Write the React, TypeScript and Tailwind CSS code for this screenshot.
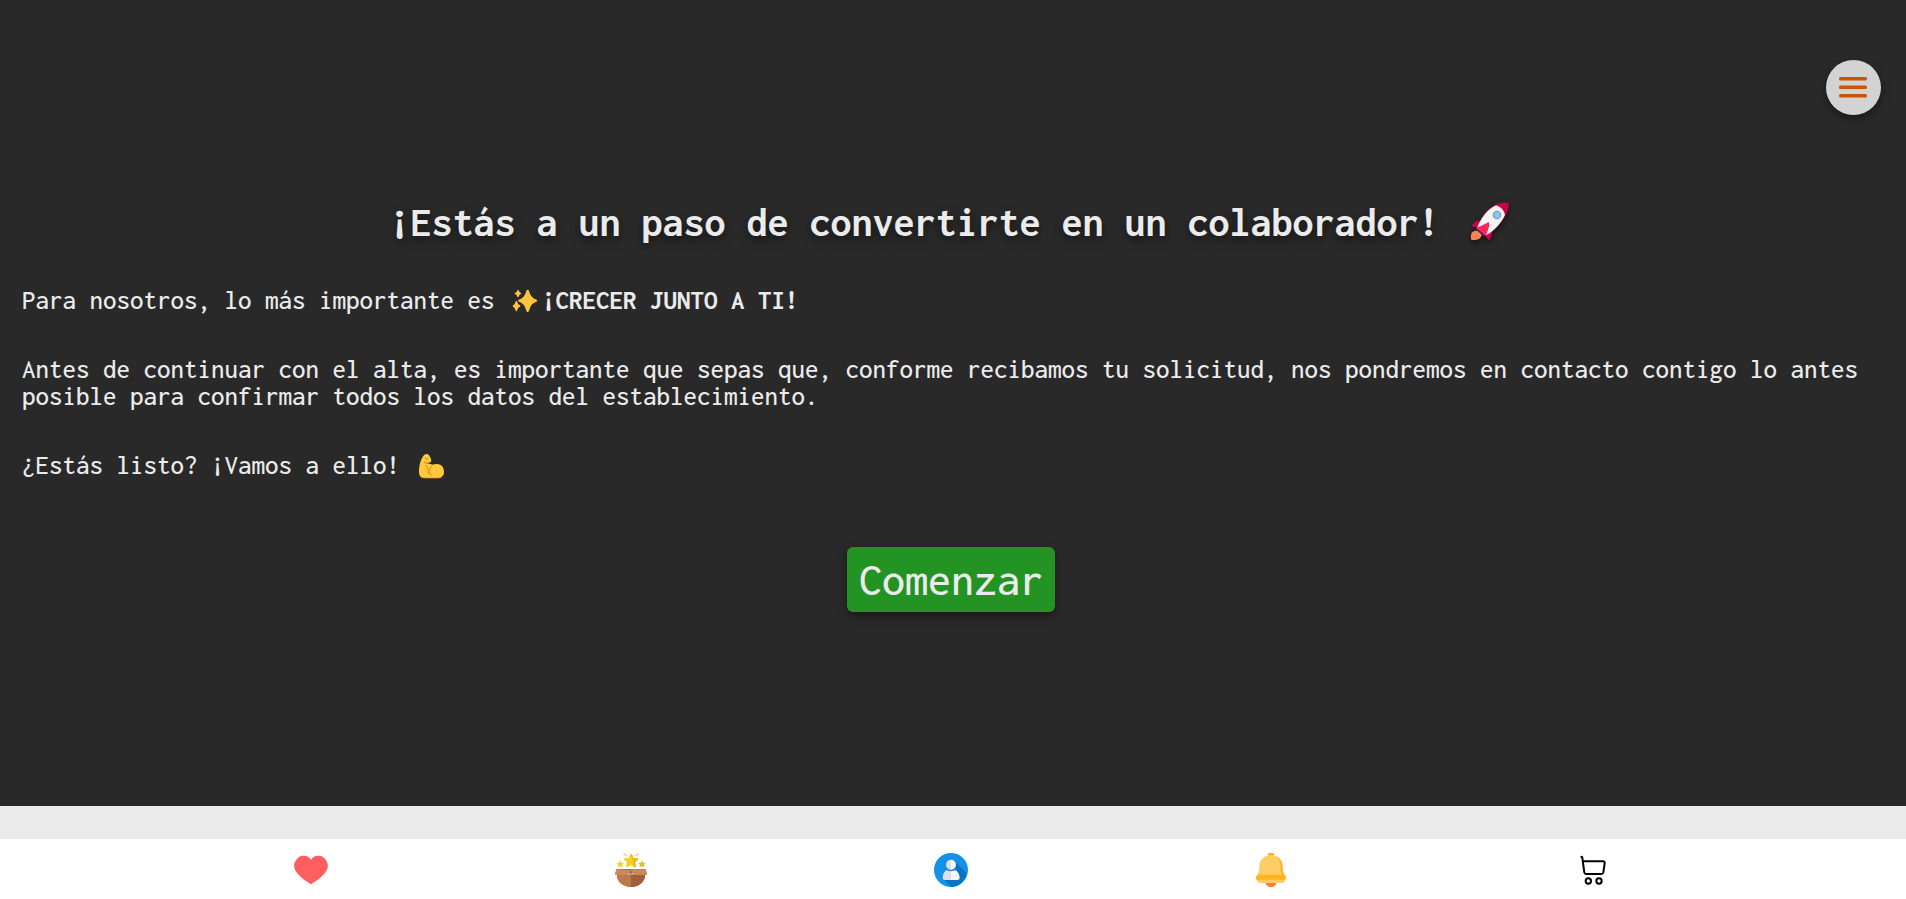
import type { ReactNode } from 'react';

function Rocket() {
  return (
    <svg viewBox="66 33 156 126" className="inline-block h-[42px] w-[52px] align-top drop-shadow-[0_3px_3px_rgba(0,0,0,0.5)]" aria-hidden="true">
      <path d="M99 127c7-7 19-6 25 0s4 15-3 19c-7 4-17 4-24 4-2-8-2-17 2-23z" fill="#ff8257" />
      <path d="M120 92c-11 0-18 7-22 17l22 5 10-20zM157 122c4 11 1 21-7 29l-16-18 8-15z" fill="#c8004e" />
      <path d="M113 115l28 22-7 2-23-19z" fill="#45315f" />
      <path d="M209 40c3 12-6 32-18 50-13 20-30 36-50 48l-29-23c8-20 20-42 38-58 20-17 46-23 59-17z" fill="#c8004e" />
      <path d="M171 46c-26 12-45 38-56 66l27 23c26-14 46-38 56-61-4-14-12-23-27-28z" fill="#f4f4f4" />
      <path d="M114 113l36-17 1 12-10 29-28-22z" fill="#ff285d" />
      <circle cx="174" cy="75" r="11" fill="#80c8ff" stroke="#9b9b9b" strokeWidth="4" />
    </svg>
  );
}

function Sparkles() {
  return (
    <svg viewBox="36 18 102 81" className="inline-block h-[27px] w-[34px] align-top" fill="#ffc43d" aria-hidden="true">
      <path d="M95 26q3 0 4 4 5 20 20 25 5 2 5 4t-5 4q-15 5-20 26-1 4-4 4t-4-4q-5-21-20-26-5-2-5-4t5-4q15-5 20-25 1-4 4-4z" />
      <path d="M66 26q2 0 3 5 2 4 6 5 2 2 0 3-5 2-6 6-1 4-3 4t-3-4q-1-4-6-6-2-1 0-3 5-1 6-5 1-5 3-5z" />
      <path d="M61 59q2 0 3 5 2 7 8 9 3 2 0 4-6 2-8 9-1 5-3 5t-3-5q-2-7-7-9-3-2 0-4 5-2 7-9 1-5 3-5z" />
    </svg>
  );
}

function Biceps() {
  return (
    <svg viewBox="0 0 34 27" className="inline-block h-[27px] w-[34px] align-top" aria-hidden="true">
      <path d="M10 3q3-2 5 0l2 4q1 3-2 4l-2 1q1 3 3 3 2-3 7-3c5 0 7 4 7 8 0 4-3 6-7 6H10c-4 0-5-3-5-7 0-5 1-9 3-13z" fill="#ffc93f" />
      <path d="M12 11l8 2-4 4-5-2z" fill="#ffc93f" />
      <path d="M10 10q3 3 6 0M11 6q2 2 3 0" fill="none" stroke="#d67d00" />
      <path d="M12 13q3 5 2 9M18 14q-3 3-3 6t3 3" fill="none" stroke="#e59213" />
      <path d="M7 25q2 1 4 1h13q3 0 4-1" fill="none" stroke="#e59213" strokeWidth=".7" />
    </svg>
  );
}

function NavIcon({ children }: { children: ReactNode }) {
  return (
    <svg viewBox="42 39 102 102" className="size-[34px]" aria-hidden="true">
      {children}
    </svg>
  );
}

const star = 'M0-21Q2-21 3-18L7-8l11 1q6 1 2 5l-8 7 3 11q0 5-5 3L0 14l-10 5q-5 2-5-3l3-11-8-7q-4-4 2-5l11-1 4-10q1-3 3-3z';

const navItems: { label: string; icon: ReactNode }[] = [
  {
    label: 'Favoritos',
    icon: <path d="M93 59C86 48 78 47 69 47c-9 0-16 5-20 12-8 11-9 22-2 34 9 15 27 28 43 38q3 2 6 0c16-10 34-23 43-38 7-12 6-23-2-34-4-7-11-12-20-12s-17 1-24 12z" fill="#ff5e5e" />,
  },
  {
    label: 'Novedades',
    icon: (
      <>
        <path d={star} transform="translate(93 62)" fill="#f4cf24" />
        <path d="M93 41q2 0 3 3l4 10 11 1q6 1 2 5l-8 7 3 11q0 5-5 3z" fill="#e5b817" />
        <path d={star} transform="translate(61 72) scale(.48)" fill="#f4cf24" />
        <path d={star} transform="translate(126 72) scale(.48)" fill="#e9be1b" />
        <g fill="#ef9b32">
          <circle cx="73" cy="43" r="2.5" />
          <circle cx="79" cy="47" r="2" />
          <circle cx="113" cy="43" r="2.5" />
          <circle cx="107" cy="47" r="2" />
        </g>
        <path d="M51 103h42v38c-22 0-38-13-42-28z" fill="#bc794b" />
        <path d="M93 103h42v10c-5 17-22 28-42 28z" fill="#9f603b" />
        <path d="M49 87h88l4 17h-37l-11-15-11 15H45z" fill="#c98356" />
        <path d="M93 89l43-2 5 17h-37z" fill="#cd8a61" />
        <path d="M49 87h44v15z" fill="#a7663e" />
        <path d="M93 89l42-2-42 15z" fill="#b8754d" />
        <path d="M49 87l44 3-11 14H45zM137 87l-44 3 11 14h37z" fill="#cb875d" />
      </>
    ),
  },
  {
    label: 'Perfil',
    icon: (
      <>
        <circle cx="93" cy="90" r="51" fill="#1592e6" />
        <path d="M104 64l36 36c-4 23-22 40-46 41L71 118z" fill="#0874c4" />
        <path d="M93 59a15 15 0 000 30zM93 89H82c-9 4-14 13-14 25q0 6 7 6h18z" fill="#dedede" />
        <path d="M93 59a15 15 0 010 30zM93 89h11c9 4 15 13 15 25q0 6-7 6H93z" fill="#f6f6f6" />
        <path d="M77 86q16 12 32 0" fill="none" stroke="#1588d8" strokeWidth="4" />
      </>
    ),
  },
  {
    label: 'Notificaciones',
    icon: (
      <>
        <path d="M76 126h34c-1 9-8 15-17 15s-16-6-17-15z" fill="#ff7e32" />
        <path d="M84 50v-8q0-3 4-3h10q4 0 4 3v8z" fill="#ffb21d" />
        <path d="M93 46c-22 0-34 14-35 34-1 16-3 22-9 28h88c-6-6-8-12-9-28-1-20-13-34-35-34z" fill="#ffcc65" />
        <path d="M107 49c14 5 21 16 21 31 1 16 3 22 9 28h-12c-4-8-3-28-5-38-2-11-7-17-13-21z" fill="#ffb52b" />
        <path d="M54 104h78c7 5 8 11 3 17H51c-5-6-4-12 3-17z" fill="#ffb31d" />
        <path d="M50 119h86c-1 6-5 10-11 10H61c-6 0-10-4-11-10z" fill="#ffcc65" />
      </>
    ),
  },
  {
    label: 'Carrito',
    icon: (
      <g fill="none" stroke="#000" strokeWidth="6" strokeLinecap="round" strokeLinejoin="round">
        <path d="M64 50q3 0 3 4l6 43q1 5 5 5h46q5 0 6-5l4-27q1-6-5-6H69" />
        <circle cx="85" cy="123" r="8" />
        <circle cx="117" cy="123" r="8" />
      </g>
    ),
  },
];

export default function App() {
  return (
    <div className="relative flex min-h-screen flex-col bg-[#ebebeb] font-['Inconsolata','Noto_Sans_Mono_CJK_JP',monospace] text-[#ebebeb]">
      <button
        type="button"
        aria-label="Abrir menú"
        className="absolute top-[60px] right-[25px] flex size-[55px] items-center justify-center rounded-full bg-[#d3d3d3] shadow-[0_4px_8px_rgba(0,0,0,0.4)]"
      >
        <svg viewBox="0 0 29 23" className="h-[23px] w-[29px]" fill="#cb5507" aria-hidden="true">
          <rect y="1" width="28" height="3.6" rx="1.5" />
          <rect y="9.5" width="28" height="3.6" rx="1.5" />
          <rect y="18" width="28" height="3.6" rx="1.5" />
        </svg>
      </button>

      <main className="flex flex-1 flex-col bg-[#292929] pt-[201px] pr-[26px] pb-12 pl-[22px]">
        <h1 className="text-center text-[42px] leading-[42px] font-bold [text-shadow:0_4px_8px_rgba(0,0,0,0.5)]">
          ¡Estás a un paso de convertirte en un colaborador! <Rocket />
        </h1>
        <div className="mt-11 flex flex-col gap-[42px] text-[27px] leading-[27px] font-medium">
          <p>
            Para nosotros, lo más importante es <Sparkles />
            <strong>¡CRECER JUNTO A TI!</strong>
          </p>
          <p>
            Antes de continuar con el alta, es importante que sepas que, conforme recibamos tu solicitud, nos pondremos en
            contacto contigo lo antes posible para confirmar todos los datos del establecimiento.
          </p>
          <p>
            ¿Estás listo? ¡Vamos a ello! <Biceps />
          </p>
        </div>
        <button
          type="button"
          className="mt-[68px] self-center rounded-md bg-[#239323] px-3 py-2 text-[46px] leading-[49px] font-medium shadow-[0_4px_8px_rgba(0,0,0,0.4)]"
        >
          Comenzar
        </button>
      </main>

      <footer className="mt-[33px] h-[60px] bg-white pr-1">
        <nav className="mx-auto flex max-w-[1600px] justify-around pt-[14px]">
          {navItems.map(({ label, icon }) => (
            <a key={label} href="#" aria-label={label}>
              <NavIcon>{icon}</NavIcon>
            </a>
          ))}
        </nav>
      </footer>
    </div>
  );
}
